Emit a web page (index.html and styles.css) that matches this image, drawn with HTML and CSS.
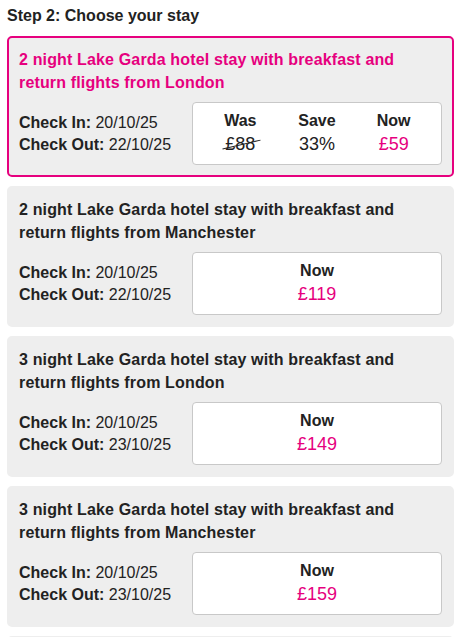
FILE: index.html
```html
<!DOCTYPE html>
<html lang="en">
<head>
<meta charset="utf-8">
<title>Choose your stay</title>
<link rel="stylesheet" href="styles.css">
</head>
<body>
<h2 class="step-title">Step 2: Choose your stay</h2>
<div class="stays">
  <div class="stay selected">
    <div class="stay-title">2 night Lake Garda hotel stay with breakfast and return flights from London</div>
    <div class="stay-row">
      <div class="dates">
        <div><b>Check In:</b> 20/10/25</div>
        <div><b>Check Out:</b> 22/10/25</div>
      </div>
      <div class="price-box three">
        <div class="col"><div class="label">Was</div><div class="val"><span class="was">£88</span></div></div>
        <div class="col"><div class="label">Save</div><div class="val">33%</div></div>
        <div class="col"><div class="label">Now</div><div class="val now">£59</div></div>
      </div>
    </div>
  </div>
  <div class="stay">
    <div class="stay-title">2 night Lake Garda hotel stay with breakfast and return flights from Manchester</div>
    <div class="stay-row">
      <div class="dates">
        <div><b>Check In:</b> 20/10/25</div>
        <div><b>Check Out:</b> 22/10/25</div>
      </div>
      <div class="price-box">
        <div class="col"><div class="label">Now</div><div class="val now">£119</div></div>
      </div>
    </div>
  </div>
  <div class="stay">
    <div class="stay-title">3 night Lake Garda hotel stay with breakfast and return flights from London</div>
    <div class="stay-row">
      <div class="dates">
        <div><b>Check In:</b> 20/10/25</div>
        <div><b>Check Out:</b> 23/10/25</div>
      </div>
      <div class="price-box">
        <div class="col"><div class="label">Now</div><div class="val now">£149</div></div>
      </div>
    </div>
  </div>
  <div class="stay">
    <div class="stay-title">3 night Lake Garda hotel stay with breakfast and return flights from Manchester</div>
    <div class="stay-row">
      <div class="dates">
        <div><b>Check In:</b> 20/10/25</div>
        <div><b>Check Out:</b> 23/10/25</div>
      </div>
      <div class="price-box">
        <div class="col"><div class="label">Now</div><div class="val now">£159</div></div>
      </div>
    </div>
  </div>
  <div class="stay">
    <div class="stay-title">4 night Lake Garda hotel stay with breakfast and return flights from London</div>
    <div class="stay-row">
      <div class="dates">
        <div><b>Check In:</b> 20/10/25</div>
        <div><b>Check Out:</b> 24/10/25</div>
      </div>
      <div class="price-box">
        <div class="col"><div class="label">Now</div><div class="val now">£179</div></div>
      </div>
    </div>
  </div>
</div>
</body>
</html>
```
FILE: styles.css
```css
html, body {
  margin: 0;
  background: #ffffff;
}
body {
  padding: 5px 8px 0 7px;
  font-family: "Liberation Sans", Arial, Helvetica, sans-serif;
  color: #222222;
  font-size: 16px;
}
.step-title {
  font-size: 16px;
  font-weight: bold;
  line-height: 22px;
  margin: 0 0 9px 0;
  color: #222222;
}
.stays {
  display: flex;
  flex-direction: column;
  gap: 9px;
}
.stay {
  background: #eeeeee;
  border: 2px solid #eeeeee;
  border-radius: 5px;
  padding: 10px;
}
.stay.selected {
  border-color: #e6007e;
}
.stay-title {
  font-weight: bold;
  font-size: 16px;
  line-height: 23px;
  color: #222222;
  padding-right: 34px;
  letter-spacing: 0.15px;
}
.selected .stay-title {
  color: #e6007e;
}
.stay-row {
  display: flex;
  align-items: center;
  margin-top: 8px;
}
.dates {
  flex: 0 0 173px;
  line-height: 22px;
  font-size: 16px;
}
.dates b {
  font-weight: bold;
}
.price-box {
  flex: 1;
  background: #ffffff;
  border: 1px solid #c8c8c8;
  border-radius: 4px;
  padding: 7px 9px 8px 9px;
  display: grid;
  grid-template-columns: 1fr;
  text-align: center;
}
.price-box.three {
  grid-template-columns: 1fr 1fr 1fr;
}
.label {
  font-weight: bold;
  font-size: 16px;
  line-height: 22px;
}
.val {
  font-size: 18px;
  line-height: 24px;
}
.now {
  color: #e6007e;
}
.was {
  position: relative;
  display: inline-block;
}
.was::after {
  content: "";
  position: absolute;
  left: -3px;
  right: -6px;
  top: 50%;
  height: 1px;
  background: #222222;
  transform: rotate(-13deg);
}
```
